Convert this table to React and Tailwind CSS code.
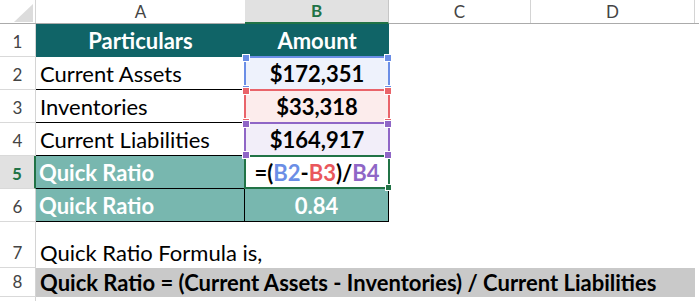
import React from "react";

const font = { fontFamily: "Lato, 'Open Sans', sans-serif" };

function RowHead({ n, h, active }) {
  return (
    <div
      className={
        "w-[36px] shrink-0 flex items-end justify-center border-b border-[#d9d9d9] " +
        (active
          ? "bg-[#e1e1e1] text-[#217346] font-bold border-r-2 border-r-[#217346]"
          : "text-[#444] border-r border-r-[#d4d4d4]")
      }
      style={{ height: h }}
    >
      {n ? <span className="text-[17px] leading-none pb-[6px]">{n}</span> : null}
    </div>
  );
}

function Handle({ pos, color }) {
  const p = {
    tl: "-top-[4px] -left-[4px]",
    tr: "-top-[4px] -right-[4px]",
    bl: "-bottom-[4px] -left-[4px]",
    br: "-bottom-[4px] -right-[4px]",
  }[pos];
  return (
    <div
      className={"absolute w-[8px] h-[8px] border border-white z-10 " + p}
      style={{ background: color }}
    />
  );
}

function RefCell({ color, bg, children }) {
  return (
    <div
      className="relative w-[144px] shrink-0 flex items-center justify-center font-bold text-[22px] text-black"
      style={{ background: bg }}
    >
      <div
        className="absolute -top-[1px] -left-[1px] -right-[1px] -bottom-[1px] border-2"
        style={{ borderColor: color }}
      >
        <Handle pos="tl" color={color} />
        <Handle pos="tr" color={color} />
        <Handle pos="bl" color={color} />
        <Handle pos="br" color={color} />
      </div>
      <span className="relative">{children}</span>
    </div>
  );
}

export default function App() {
  return (
    <div className="w-[699px] h-[301px] overflow-hidden bg-white" style={font}>
      {/* column header */}
      <div className="flex h-[24px] border-b border-[#ababab]">
        <div className="w-[36px] shrink-0 relative border-r border-[#d4d4d4]">
          <svg className="absolute left-[14px] top-[4px]" width="19" height="18" viewBox="0 0 19 18">
            <polygon points="19,0 19,18 0,18" fill="#dcdcdc" />
          </svg>
        </div>
        <div className="w-[209px] shrink-0 flex items-center justify-center text-[17px] text-[#444]">A</div>
        <div className="w-[144px] shrink-0 flex items-center justify-center text-[17px] font-bold text-[#217346] bg-[#e1e1e1] border-b-2 border-[#217346] border-r border-r-[#c6c6c6] -mb-[1px]">
          B
        </div>
        <div className="w-[142px] shrink-0 flex items-center justify-center text-[17px] text-[#444] border-r border-[#d4d4d4]">C</div>
        <div className="w-[164px] shrink-0 flex items-center justify-center text-[17px] text-[#444] border-r border-[#d4d4d4]">D</div>
        <div className="flex-1" />
      </div>

      {/* row 1 */}
      <div className="flex h-[33px]">
        <RowHead n="1" h={33} />
        <div className="w-[353px] shrink-0 flex bg-[#106467] text-white font-bold text-[22px]">
          <div className="w-[209px] flex items-center justify-center">Particulars</div>
          <div className="w-[144px] flex items-center justify-center">Amount</div>
        </div>
      </div>

      {/* row 2 */}
      <div className="flex h-[33px]">
        <RowHead n="2" h={33} />
        <div className="w-[209px] shrink-0 flex items-center pl-[4px] text-[22px] text-black border-b border-black">Current Assets</div>
        <RefCell color="#6b8ee6" bg="#eef2fc">$172,351</RefCell>
      </div>

      {/* row 3 */}
      <div className="flex h-[33px]">
        <RowHead n="3" h={33} />
        <div className="w-[209px] shrink-0 flex items-center pl-[4px] text-[22px] text-black border-b border-black">Inventories</div>
        <RefCell color="#e9646a" bg="#fcecec">$33,318</RefCell>
      </div>

      {/* row 4 */}
      <div className="flex h-[33px]">
        <RowHead n="4" h={33} />
        <div className="w-[209px] shrink-0 flex items-center pl-[4px] text-[22px] text-black border-b border-black">Current Liabilities</div>
        <RefCell color="#8f66c6" bg="#f2eef9">$164,917</RefCell>
      </div>

      {/* row 5 */}
      <div className="flex h-[33px]">
        <RowHead n="5" h={33} active />
        <div className="w-[209px] shrink-0 flex items-center pl-[3px] text-[22px] text-white font-bold bg-[#78b7af] border-b border-black">Quick Ratio</div>
        <div className="relative w-[144px] shrink-0 flex items-center justify-center text-[22px] font-bold bg-white">
          <div className="absolute -top-[1px] -left-[1px] -right-[1px] bottom-0 border-2 border-[#217346]">
            <div className="absolute -bottom-[4px] -right-[4px] w-[7px] h-[7px] bg-[#217346] border border-white" />
          </div>
          <span className="relative">
            <span className="text-black">=(</span>
            <span className="text-[#6b8ee6]">B2</span>
            <span className="text-black">-</span>
            <span className="text-[#e9575c]">B3</span>
            <span className="text-black">)/</span>
            <span className="text-[#8f66c6]">B4</span>
          </span>
        </div>
      </div>

      {/* row 6 */}
      <div className="flex h-[33px]">
        <RowHead n="6" h={33} />
        <div className="w-[353px] shrink-0 flex bg-[#78b7af] text-white font-bold text-[22px] border-b border-black">
          <div className="w-[209px] flex items-center pl-[3px] border-r border-black">Quick Ratio</div>
          <div className="w-[144px] flex items-center justify-center border-r border-black">0.84</div>
        </div>
      </div>

      {/* row 7 */}
      <div className="flex h-[46px]">
        <RowHead n="7" h={46} />
        <div className="flex-1 flex items-end pl-[4px] text-[22px] text-black leading-[30px]">Quick Ratio Formula is,</div>
      </div>

      {/* row 8 */}
      <div className="flex h-[29px]">
        <RowHead n="8" h={29} />
        <div className="w-[659px] shrink-0 flex items-center pl-[4px] text-[22px] font-bold text-black bg-[#c9c9c9]">
          Quick Ratio = (Current Assets - Inventories) / Current Liabilities
        </div>
      </div>

      {/* row 9 */}
      <div className="flex h-[20px]">
        <RowHead n="" h={20} />
      </div>
    </div>
  );
}
